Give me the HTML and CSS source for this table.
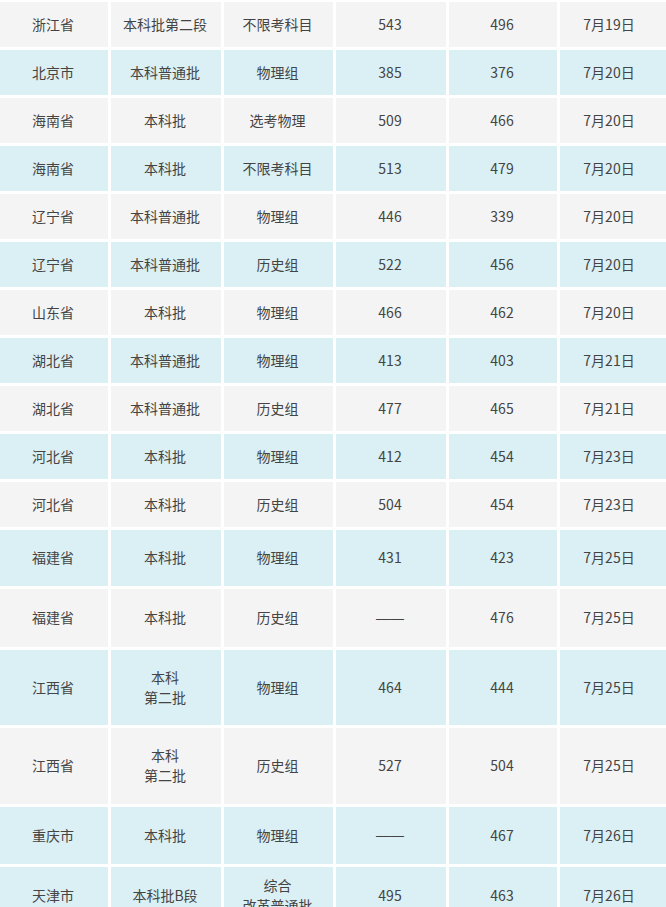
FILE: index.html
```html
<!DOCTYPE html>
<html lang="zh-CN">
<head>
<meta charset="utf-8">
<title>分数线</title>
<link rel="stylesheet" href="styles.css">
</head>
<body>
<div class="wrap">
<table class="score">
<colgroup>
<col class="c1"><col class="c2"><col class="c3"><col class="c4"><col class="c5"><col class="c6">
</colgroup>
<tbody>
<tr class="g r45"><td>浙江省</td><td>本科批第二段</td><td>不限考科目</td><td>543</td><td>496</td><td class="last">7月19日</td></tr>
<tr class="b r45"><td>北京市</td><td>本科普通批</td><td>物理组</td><td>385</td><td>376</td><td class="last">7月20日</td></tr>
<tr class="g r45"><td>海南省</td><td>本科批</td><td>选考物理</td><td>509</td><td>466</td><td class="last">7月20日</td></tr>
<tr class="b r45"><td>海南省</td><td>本科批</td><td>不限考科目</td><td>513</td><td>479</td><td class="last">7月20日</td></tr>
<tr class="g r45"><td>辽宁省</td><td>本科普通批</td><td>物理组</td><td>446</td><td>339</td><td class="last">7月20日</td></tr>
<tr class="b r45"><td>辽宁省</td><td>本科普通批</td><td>历史组</td><td>522</td><td>456</td><td class="last">7月20日</td></tr>
<tr class="g r45"><td>山东省</td><td>本科批</td><td>物理组</td><td>466</td><td>462</td><td class="last">7月20日</td></tr>
<tr class="b r45"><td>湖北省</td><td>本科普通批</td><td>物理组</td><td>413</td><td>403</td><td class="last">7月21日</td></tr>
<tr class="g r45"><td>湖北省</td><td>本科普通批</td><td>历史组</td><td>477</td><td>465</td><td class="last">7月21日</td></tr>
<tr class="b r45"><td>河北省</td><td>本科批</td><td>物理组</td><td>412</td><td>454</td><td class="last">7月23日</td></tr>
<tr class="g r45"><td>河北省</td><td>本科批</td><td>历史组</td><td>504</td><td>454</td><td class="last">7月23日</td></tr>
<tr class="b r56"><td>福建省</td><td>本科批</td><td>物理组</td><td>431</td><td>423</td><td class="last">7月25日</td></tr>
<tr class="g r58"><td>福建省</td><td>本科批</td><td>历史组</td><td><span class="dash">——</span></td><td>476</td><td class="last">7月25日</td></tr>
<tr class="b r75"><td>江西省</td><td>本科<br>第二批</td><td>物理组</td><td>464</td><td>444</td><td class="last">7月25日</td></tr>
<tr class="g r76"><td>江西省</td><td>本科<br>第二批</td><td>历史组</td><td>527</td><td>504</td><td class="last">7月25日</td></tr>
<tr class="b r57"><td>重庆市</td><td>本科批</td><td>物理组</td><td><span class="dash">——</span></td><td>467</td><td class="last">7月26日</td></tr>
<tr class="b r57"><td>天津市</td><td>本科批B段</td><td>综合<br>改革普通批</td><td>495</td><td>463</td><td class="last">7月26日</td></tr>
</tbody>
</table>
</div>
</body>
</html>
```

FILE: styles.css
```css
html, body {
  margin: 0;
  padding: 0;
  background: #ffffff;
}

body {
  width: 666px;
  height: 907px;
  overflow: hidden;
  font-family: "Noto Sans CJK SC", "Noto Sans", sans-serif;
}

.wrap {
  margin: -1px 0 0 -3px;
}

.score {
  border-collapse: separate;
  border-spacing: 3px;
  table-layout: fixed;
  width: 676px;
  font-size: 14px;
  line-height: 20px;
  color: #444444;
}

.c1 { width: 108px; }
.c2 { width: 110px; }
.c3 { width: 109px; }
.c4 { width: 110px; }
.c5 { width: 108px; }
.c6 { width: 110px; }

.score td {
  padding: 0 2px 2px 0;
  text-align: center;
  vertical-align: middle;
}

.score td.last {
  padding-right: 12px;
}

.dash {
  font-family: "Liberation Sans", sans-serif;
  letter-spacing: 0;
}

.g td { background: #f4f4f4; }
.b td { background: #dbf0f4; }

.r45 { height: 45px; }
.r56 { height: 56px; }
.r58 { height: 58px; }
.r75 { height: 75px; }
.r76 { height: 76px; }
.r57 { height: 57px; }
```
